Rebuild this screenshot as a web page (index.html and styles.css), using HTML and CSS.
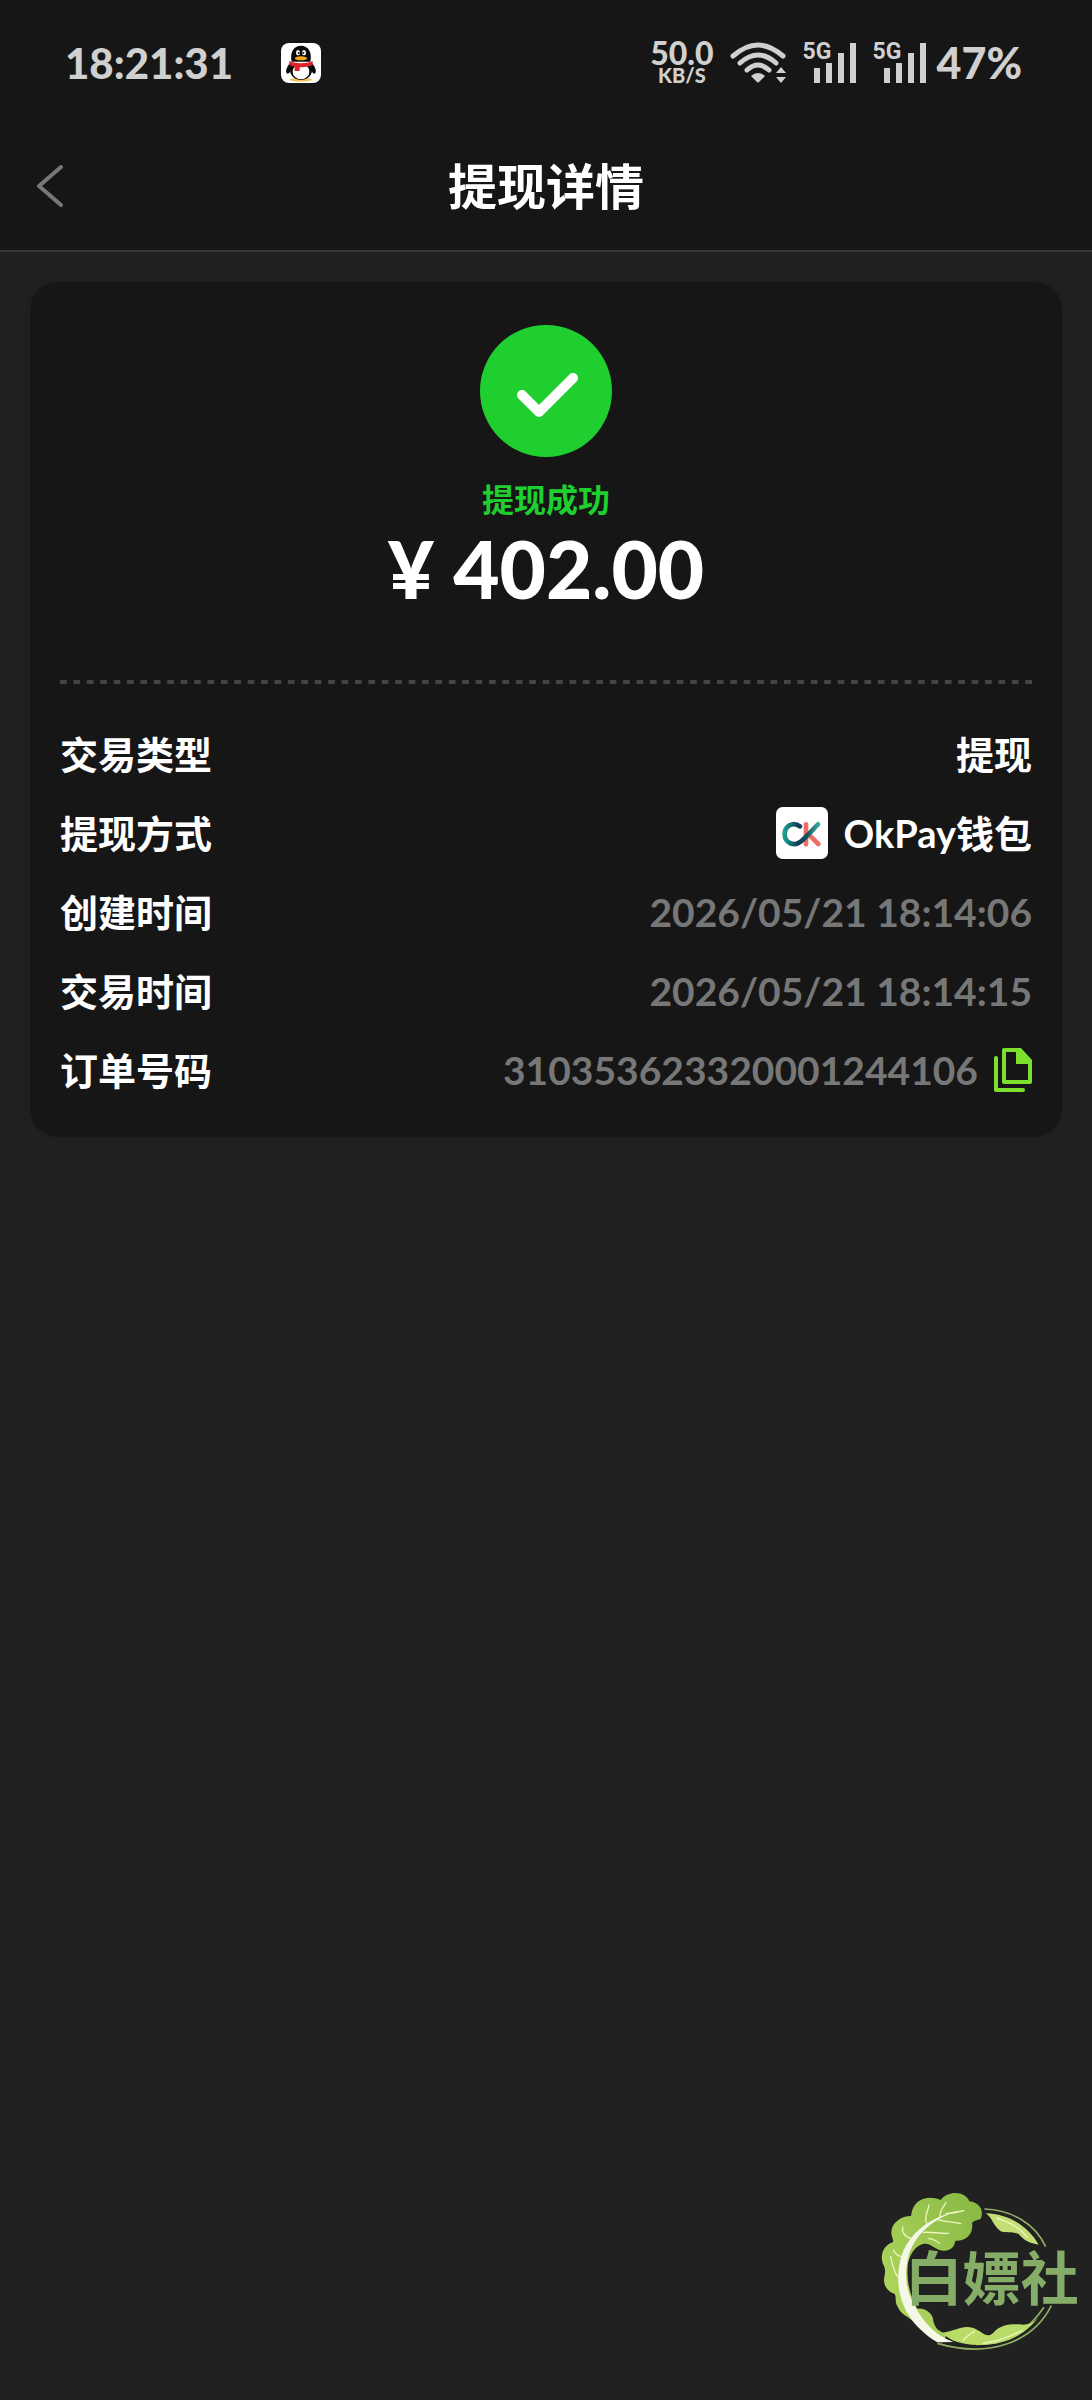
FILE: index.html
```html
<!DOCTYPE html>
<html lang="zh-CN">

<head>
  <meta charset="UTF-8">
  <meta name="viewport" content="width=device-width, initial-scale=1.0">
  <title>提现详情</title>
  <link rel="stylesheet" href="styles.css">
</head>

<body>
  <header class="header">
    <div class="status-bar">
      <span class="clock">18:21:31</span>
      <svg class="app-icon" viewBox="0 0 120 120" aria-hidden="true">
        <rect width="120" height="120" rx="24" fill="#fff"/>
        <ellipse cx="60" cy="110" rx="33" ry="6" fill="#f3c35a"/>
        <path d="M30 58C14 72 12 92 20 92c5 0 9-8 12-14zM90 58c16 14 18 34 10 34-5 0-9-8-12-14z" fill="#0b0b0b"/>
        <path d="M28 64h64c6 24-4 47-32 47S22 88 28 64z" fill="#0b0b0b"/>
        <ellipse cx="60" cy="86" rx="25" ry="23" fill="#fff"/>
        <path d="M32 56C26 28 38 8 60 8s34 20 28 48z" fill="#0b0b0b"/>
        <ellipse cx="51" cy="29" rx="6" ry="8" fill="#fff"/>
        <ellipse cx="69" cy="29" rx="6" ry="8" fill="#fff"/>
        <circle cx="53" cy="30" r="3" fill="#111"/>
        <circle cx="67" cy="30" r="3" fill="#111"/>
        <ellipse cx="60" cy="46" rx="19" ry="6" fill="#f5a91d"/>
        <path d="M25 54c20 9 50 9 70 0v12c-12 5-25 7-39 7v11H41V71c-6-1-12-3-16-5z" fill="#e3202b"/>
      </svg>
      <div class="status-right">
        <div class="speed"><span class="speed-value">50.0</span><span class="speed-unit">KB/S</span></div>
        <svg class="wifi" viewBox="0 0 57 42" aria-hidden="true">
          <g fill="none" stroke="#d0d0d0" stroke-width="5" stroke-linecap="round">
            <path d="M3 14Q28 -8 53 14"/>
            <path d="M10 21Q28 5 46 21"/>
            <path d="M17 28Q28 18 39 28"/>
          </g>
          <path d="M21 34q7-6 14 0l-6 6q-1 1-2 0zM46 31l5-6 5 6zM46 35h10l-5 6z" fill="#d0d0d0"/>
        </svg>
        <div class="signal">
          <span class="network">5G</span>
          <svg viewBox="0 0 54 42" aria-hidden="true"><path d="M11 26h6v15h-6zM23 21h6v20h-6zM35 11h6v30h-6zM47 1h6v40h-6z"/></svg>
        </div>
        <div class="signal">
          <span class="network">5G</span>
          <svg viewBox="0 0 54 42" aria-hidden="true"><path d="M11 26h6v15h-6zM23 21h6v20h-6zM35 11h6v30h-6zM47 1h6v40h-6z"/></svg>
        </div>
        <span class="battery">47%</span>
      </div>
    </div>
    <nav class="nav">
      <button class="back" type="button" aria-label="返回">
        <svg viewBox="0 0 28 42"><path d="M25 2L3 21l22 19"/></svg>
      </button>
      <h1 class="title">提现详情</h1>
    </nav>
  </header>

  <main class="card">
    <section class="result">
      <svg class="success" viewBox="0 0 132 132" aria-hidden="true">
        <circle cx="66" cy="66" r="66" fill="#1ecf2f"/>
        <path d="M42 70l17 17 34-34" fill="none" stroke="#fff" stroke-width="10" stroke-linecap="round" stroke-linejoin="round"/>
      </svg>
      <p class="result-text">提现成功</p>
      <p class="amount">¥ 402.00</p>
    </section>

    <svg class="divider" aria-hidden="true"><line x1="0" y1="2" x2="100%" y2="2" pathLength="725"/></svg>

    <dl class="details">
      <div class="row">
        <dt>交易类型</dt>
        <dd>提现</dd>
      </div>
      <div class="row">
        <dt>提现方式</dt>
        <dd>
          <svg class="wallet" viewBox="0 0 156 156" aria-hidden="true">
            <defs>
              <linearGradient id="teal" x1="0" y1="0" x2="1" y2="0">
                <stop offset="0" stop-color="#1b9a90"/>
                <stop offset=".4" stop-color="#123f56"/>
                <stop offset=".65" stop-color="#174a5c"/>
                <stop offset="1" stop-color="#3aa79a"/>
              </linearGradient>
            </defs>
            <rect width="156" height="156" rx="20" fill="#fff"/>
            <g fill="none" stroke-width="14" stroke-linecap="round" stroke-linejoin="round">
              <path d="M90 52v60M98 82l29 29" stroke="#ec6f66"/>
              <path d="M72 58C50 42 26 58 26 82c0 26 28 38 48 22 20-17 35-35 52-52" stroke="url(#teal)"/>
            </g>
          </svg>
          OkPay钱包
        </dd>
      </div>
      <div class="row">
        <dt>创建时间</dt>
        <dd class="muted">2026/05/21 18:14:06</dd>
      </div>
      <div class="row">
        <dt>交易时间</dt>
        <dd class="muted">2026/05/21 18:14:15</dd>
      </div>
      <div class="row">
        <dt>订单号码</dt>
        <dd class="muted">
          310353623320001244106
          <button class="copy" type="button" aria-label="复制">
            <svg viewBox="0 0 38 44">
              <path d="M2 10v32h27" fill="none" stroke="#7be02e" stroke-width="4" stroke-linecap="round" stroke-linejoin="round"/>
              <path fill-rule="evenodd" d="M10 0h17l11 12v22q0 2-2 2H10q-2 0-2-2V2q0-2 2-2zm2 4v28h22V16H22V4z" fill="#7be02e"/>
            </svg>
          </button>
        </dd>
      </div>
    </dl>
  </main>

  <svg class="brand" viewBox="0 0 696 600" role="img" aria-label="白嫖社">
    <defs>
      <linearGradient id="leaf" x1="1" y1="0" x2="0" y2="1">
        <stop offset="0" stop-color="#86b843"/>
        <stop offset="1" stop-color="#b8db62"/>
      </linearGradient>
    </defs>
    <!-- thin outer ring -->
    <g fill="none" stroke="#8fae62" stroke-width="5">
      <path d="M373 117C455 120 525 160 557 230"/>
      <path d="M574 407C520 515 390 566 232 520"/>
      <path d="M552 412C500 487 440 524 350 523"/>
    </g>
    <!-- leaf -->
    <path d="M362 147C372 124 362 98 328 94 318 66 268 58 242 90 208 76 160 82 153 138 118 138 88 166 95 196 97 206 102 214 98 217 66 228 58 262 72 288 78 302 74 312 73 322 68 346 84 366 104 372 110 382 104 396 112 408 120 426 130 434 142 440L246 518 262 492C230 484 222 468 219 446 214 428 196 414 172 416 150 380 138 330 144 280 152 250 164 230 188 222 212 216 226 242 252 242 276 242 284 226 286 212 318 214 342 190 336 158 346 150 354 150 362 147z" fill="url(#leaf)"/>
    <path d="M377 130c65 2 125 34 159 94-26-4-44-12-60-32-22-8-42-2-54-8-26-20-22-38-45-54z" fill="#c3df73"/>
    <path d="M248 488c38-4 58-24 92-14 28 10 38 34 60 14 26-28 60-26 90-24 30-2 44-16 61-44-44 72-114 108-198 105-48-2-85-12-105-37z" fill="#b9dc69"/>
    <!-- stem and veins -->
    <path d="M300 121C210 140 144 190 122 266 100 352 124 452 232 517L280 516C232 498 200 466 176 428 142 374 130 330 144 264 162 196 216 146 300 121z" fill="#f5f8e9"/>
    <g fill="none" stroke="#edf5bd" stroke-width="4" stroke-linecap="round">
      <path d="M200 160C190 140 206 120 207 105M240 141C238 122 250 112 258 98M230 148c30 8 52 8 72 13M190 187c28-2 46 4 76 3M258 131c24-2 38-6 54-9M153 205c-20-4-28-20-25-34M126 260c-14-2-22-10-26-20M116 324c-10-10-18-34-24-64M206 206c14 0 22 6 32 14"/>
      <path d="M410 144c40 14 70 28 92 58M310 512c10-16 22-20 34-28M370 520c44-4 80-20 116-38"/>
    </g>
    <text class="brand-text" x="134" y="390">白嫖社</text>
  </svg>
</body>

</html>
```

FILE: styles.css
```css
* {
  margin: 0;
  padding: 0;
  box-sizing: border-box;
}

body {
  font-family: Lato, "Noto Sans CJK SC", sans-serif;
  font-weight: bold;
  background-color: #212121;
  color: #fff;
  min-height: 100vh;
  display: flex;
  flex-direction: column;
}

button {
  background: none;
  border: none;
  cursor: pointer;
}

svg {
  display: block;
  flex-shrink: 0;
}

.header {
  background-color: #161616;
  border-bottom: 2px solid #383838;
}

.status-bar {
  display: flex;
  align-items: center;
  height: 125px;
  padding: 0 70px 0 65px;
  color: #d0d0d0;
  font-weight: 900;
}

.clock {
  font-size: 42px;
}

.app-icon {
  width: 40px;
  height: 40px;
  margin-left: 48px;
}

.status-right {
  display: flex;
  align-items: center;
  gap: 16px;
  margin-left: auto;
}

.speed {
  display: flex;
  flex-direction: column;
  align-items: center;
}

.speed-value {
  font-size: 32px;
  line-height: 24px;
}

.speed-unit {
  font-size: 20px;
  line-height: 20px;
}

.wifi {
  width: 57px;
  height: 42px;
}

.signal {
  position: relative;
}

.signal svg {
  width: 54px;
  height: 42px;
  fill: #d0d0d0;
}

/* network type sits over the short bars */
.network {
  position: absolute;
  top: 0;
  left: 0;
  font-family: Roboto, sans-serif;
  font-size: 23px;
  font-weight: bold;
  line-height: 20px;
}

.battery {
  font-size: 43px;
  margin-left: -6px;
}

.nav {
  display: grid;
  grid-template-columns: 100px 1fr 100px;
  align-items: center;
  height: 125px;
  padding-bottom: 4px;
}

.back {
  display: flex;
  align-items: center;
  height: 100px;
  padding-left: 36px;
}

.back svg {
  width: 28px;
  height: 42px;
  fill: none;
  stroke: #777;
  stroke-width: 4;
  stroke-linecap: round;
  stroke-linejoin: round;
}

.title {
  font-size: 49px;
  line-height: 72px;
  text-align: center;
}

.card {
  margin: 30px;
  padding: 43px 30px 28px;
  background-color: #161616;
  border-radius: 28px;
  box-shadow: 0 0 24px rgba(0, 0, 0, 0.1);
}

.result {
  display: flex;
  flex-direction: column;
  align-items: center;
}

.success {
  width: 132px;
  height: 132px;
}

.result-text {
  margin-top: 21px;
  font-size: 32px;
  line-height: 44px;
  color: #1ecf2f;
}

.amount {
  font-size: 80px;
  font-weight: 900;
  line-height: 92px;
}

.divider {
  width: 100%;
  height: 4px;
  margin: 66px 0 30px;
}

.divider line {
  stroke: #444;
  stroke-width: 4;
  stroke-dasharray: 5 5;
}

.row {
  display: flex;
  align-items: center;
  justify-content: space-between;
  height: 79px;
  font-size: 38px;
  line-height: 56px;
}

.row dd {
  display: flex;
  align-items: center;
  gap: 16px;
}

.row .muted {
  color: #777;
  font-size: 39px;
}

.wallet {
  width: 52px;
  height: 52px;
}

.copy svg {
  width: 38px;
  height: 44px;
}

/* watermark in the bottom corner */
.brand {
  width: 232px;
  height: 200px;
  margin-top: auto;
  margin-bottom: 30px;
  align-self: flex-end;
}

.brand-text {
  font-family: "Noto Sans CJK SC", sans-serif;
  font-size: 174px;
  font-weight: bold;
  fill: #86ad68;
}
```
